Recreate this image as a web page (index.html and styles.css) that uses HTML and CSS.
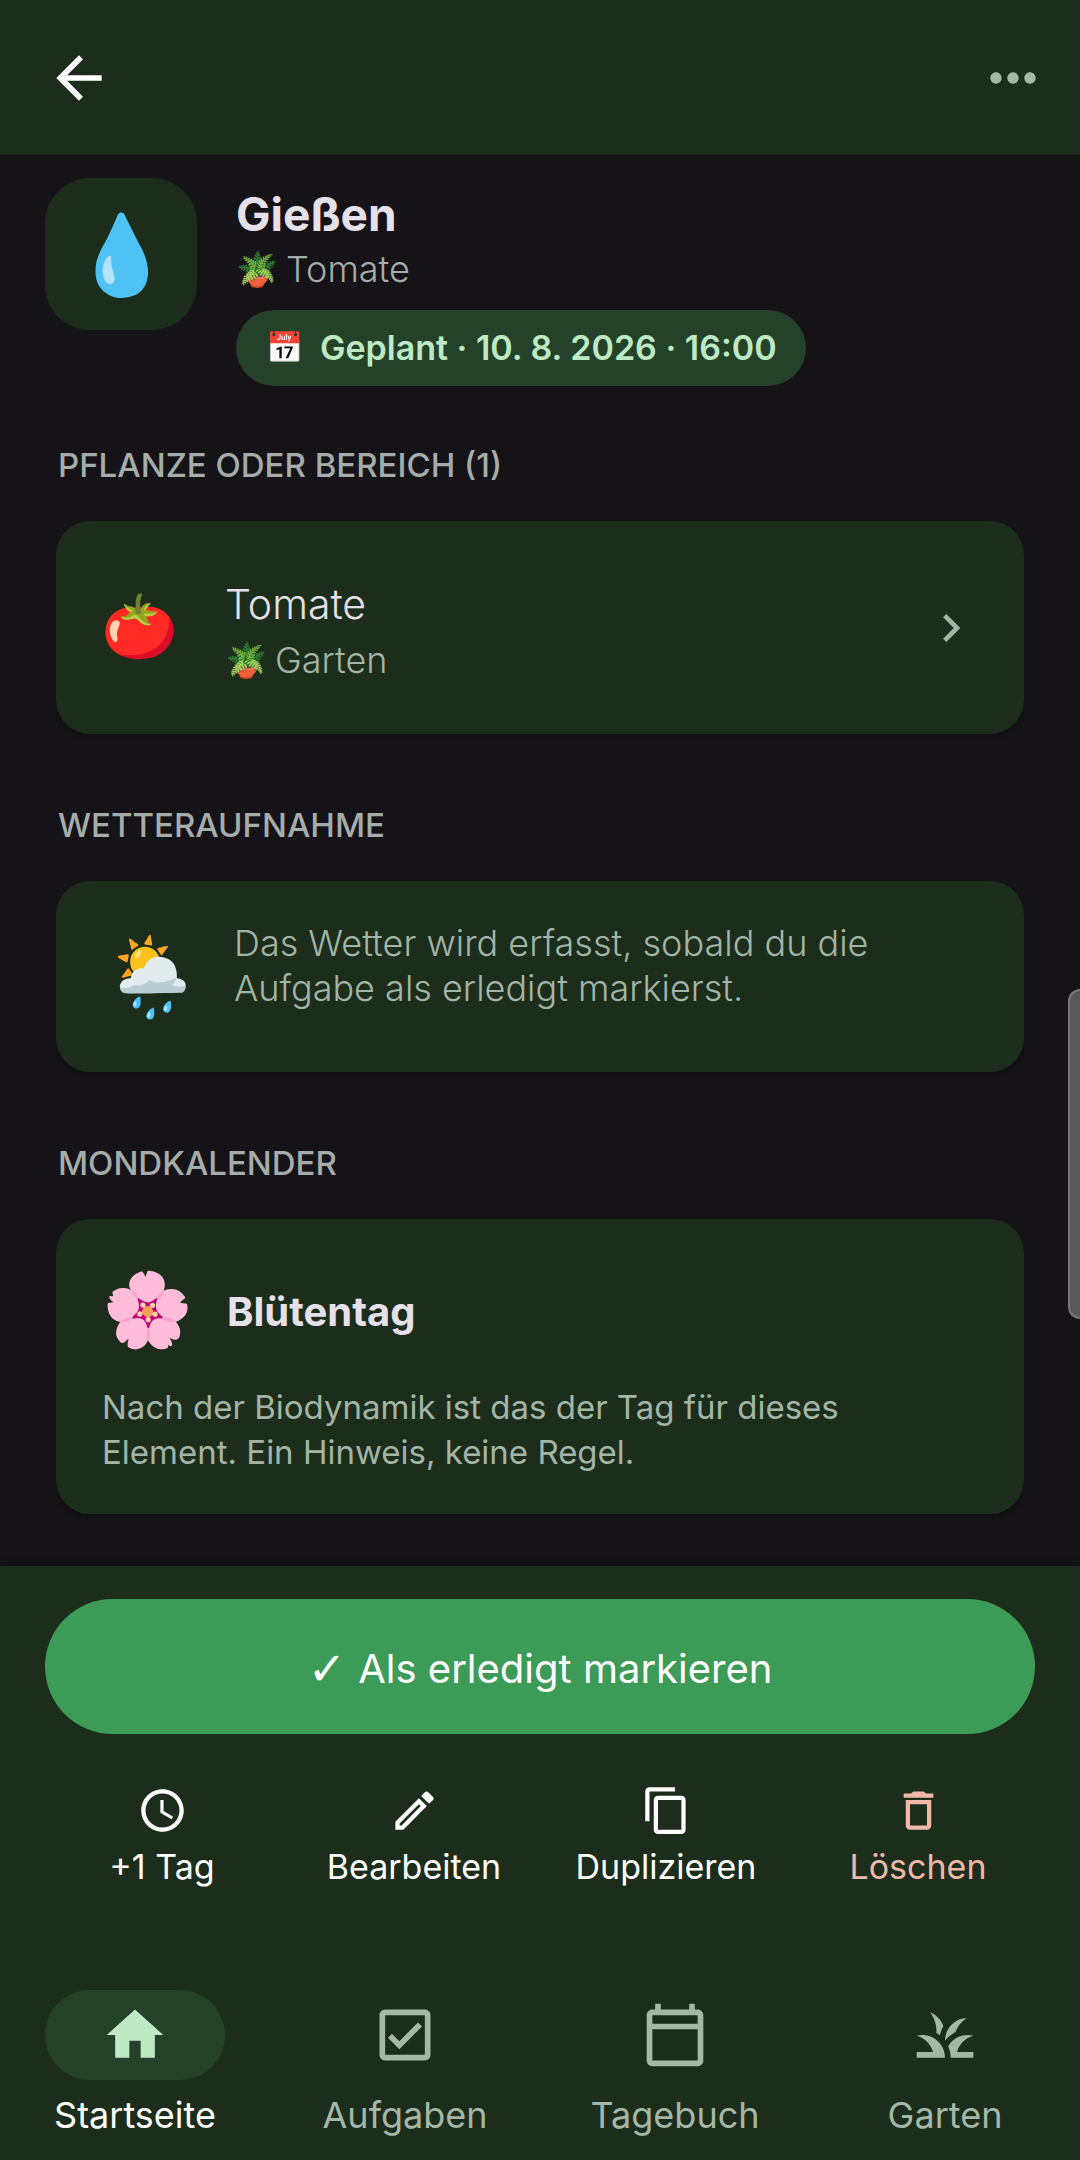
FILE: index.html
```html
<!DOCTYPE html>
<html lang="de">
<head>
  <meta charset="UTF-8" />
  <title>Gießen</title>
  <meta name="viewport" content="width=device-width, initial-scale=1.0" />
  <link rel="stylesheet" href="styles.css">
</head>
<body>
  <header class="topbar">
    <button class="icon-btn" aria-label="Zurück">
      <svg class="icon" viewBox="0 0 24 24"><path d="M20 11H7.83l5.59-5.59L12 4l-8 8 8 8 1.41-1.41L7.83 13H20v-2z"/></svg>
    </button>
    <button class="icon-btn muted" aria-label="Mehr">
      <svg class="icon" viewBox="0 0 24 24"><path d="M6 10c-1.1 0-2 .9-2 2s.9 2 2 2 2-.9 2-2-.9-2-2-2zm12 0c-1.1 0-2 .9-2 2s.9 2 2 2 2-.9 2-2-.9-2-2-2zm-6 0c-1.1 0-2 .9-2 2s.9 2 2 2 2-.9 2-2-.9-2-2-2z"/></svg>
    </button>
  </header>

  <main class="content">
    <div class="hero">
      <div class="hero-icon"><span class="emoji big">💧</span></div>
      <div class="hero-text">
        <h1>Gießen</h1>
        <p class="sub"><span class="emoji">🪴</span> Tomate</p>
        <div class="pill"><span class="emoji small">📅</span> Geplant · 10. 8. 2026 · 16:00</div>
      </div>
    </div>

    <section>
      <h2>PFLANZE ODER BEREICH (1)</h2>
      <a class="card plant" href="#">
        <span class="emoji large">🍅</span>
        <span class="plant-text">
          <span class="plant-name">Tomate</span>
          <span class="sub"><span class="emoji">🪴</span> Garten</span>
        </span>
        <svg class="chevron" viewBox="0 0 24 24"><path d="M10 6 8.59 7.41 13.17 12l-4.58 4.59L10 18l6-6z"/></svg>
      </a>
    </section>

    <section>
      <h2>WETTERAUFNAHME</h2>
      <div class="card weather">
        <span class="emoji big">🌦️</span>
        <p>Das Wetter wird erfasst, sobald du die Aufgabe als erledigt markierst.</p>
      </div>
    </section>

    <section>
      <h2>MONDKALENDER</h2>
      <div class="card moon">
        <div class="moon-head"><span class="emoji flower">🌸</span><h3>Blütentag</h3></div>
        <p>Nach der Biodynamik ist das der Tag für dieses Element. Ein Hinweis, keine Regel.</p>
      </div>
    </section>
  </main>

  <div class="scroll-handle"></div>

  <footer class="bottom">
    <button class="done-btn"><span class="check">✓</span> Als erledigt markieren</button>

    <div class="actions">
      <button>
        <svg class="icon-sm" viewBox="0 0 24 24"><path d="M11.99 2C6.47 2 2 6.48 2 12s4.47 10 9.99 10C17.52 22 22 17.52 22 12S17.52 2 11.99 2zM12 20c-4.42 0-8-3.58-8-8s3.58-8 8-8 8 3.58 8 8-3.58 8-8 8zm.5-13H11v6l5.25 3.15.75-1.23-4.5-2.67z"/></svg>
        +1 Tag
      </button>
      <button>
        <svg class="icon-sm" viewBox="0 0 24 24"><path d="M14.06 9.02l.92.92L5.92 19H5v-.92l9.06-9.06M17.66 3c-.25 0-.51.1-.7.29l-1.83 1.83 3.75 3.75 1.83-1.83c.39-.39.39-1.02 0-1.41l-2.34-2.34c-.2-.2-.45-.29-.71-.29zm-3.6 3.19L3 17.25V21h3.75L17.81 9.94l-3.75-3.75z"/></svg>
        Bearbeiten
      </button>
      <button>
        <svg class="icon-sm" viewBox="0 0 24 24"><path d="M16 1H4c-1.1 0-2 .9-2 2v14h2V3h12V1zm3 4H8c-1.1 0-2 .9-2 2v14c0 1.1.9 2 2 2h11c1.1 0 2-.9 2-2V7c0-1.1-.9-2-2-2zm0 16H8V7h11v14z"/></svg>
        Duplizieren
      </button>
      <button class="danger">
        <svg class="icon-sm" viewBox="0 0 24 24"><path d="M6 19c0 1.1.9 2 2 2h8c1.1 0 2-.9 2-2V7H6v12zM8 9h8v10H8V9zm7.5-5l-1-1h-5l-1 1H5v2h14V4z"/></svg>
        Löschen
      </button>
    </div>

    <nav class="tabs">
      <a class="tab active" href="#">
        <span class="tab-icon"><svg class="icon" viewBox="0 0 24 24"><path d="M10 20v-6h4v6h5v-8h3L12 3 2 12h3v8z"/></svg></span>
        Startseite
      </a>
      <a class="tab" href="#">
        <span class="tab-icon"><svg class="icon" viewBox="0 0 24 24"><path d="M19 3H5c-1.1 0-2 .9-2 2v14c0 1.1.9 2 2 2h14c1.1 0 2-.9 2-2V5c0-1.1-.9-2-2-2zm0 16H5V5h14v14zM17.99 9l-1.41-1.42-6.59 6.59-2.58-2.57-1.42 1.41 4 3.99z"/></svg></span>
        Aufgaben
      </a>
      <a class="tab" href="#">
        <span class="tab-icon"><svg class="icon" viewBox="0 0 24 24"><path d="M20 3h-1V1h-2v2H7V1H5v2H4c-1.1 0-2 .9-2 2v16c0 1.1.9 2 2 2h16c1.1 0 2-.9 2-2V5c0-1.1-.9-2-2-2zm0 18H4V10h16v11zm0-13H4V5h16v3z"/></svg></span>
        Tagebuch
      </a>
      <a class="tab" href="#">
        <span class="tab-icon"><svg class="icon" viewBox="0 0 24 24"><path d="M12 20H2v-2h5.75C7.02 15.19 4.81 12.99 2 12.26 2.64 12.1 3.31 12 4 12c4.42 0 8 3.58 8 8zM22 12.26c-.64-.16-1.31-.26-2-.26-2.93 0-5.48 1.58-6.88 3.93.29.66.53 1.35.67 2.07.13.65.2 1.32.2 2H22v-2h-5.75c.73-2.81 2.94-5.01 5.75-5.74zM15.64 11.02c.78-2.09 2.23-3.84 4.09-5C15.44 6.16 12 9.67 12 14v.02c.95-1.27 2.2-2.3 3.64-3zM11.42 8.85C10.58 6.66 8.88 4.89 6.7 4 8.14 5.86 9 8.18 9 10.71c0 .21-.03.41-.04.61.43.24.83.52 1.22.82.21-1.18.65-2.29 1.24-3.29z"/></svg></span>
        Garten
      </a>
    </nav>
  </footer>
</body>
</html>
```

FILE: styles.css
```css
* { box-sizing: border-box; margin: 0; padding: 0; }
body { display: flex; flex-direction: column; min-height: 100vh; background-color: #151218; color: #e6e0e9; font-family: Inter, "Open Sans", sans-serif; font-size: 36px; }
button { background: none; border: none; color: inherit; font: inherit; cursor: pointer; }
a { color: inherit; text-decoration: none; }
svg { display: block; fill: currentColor; }

.topbar { display: flex; justify-content: space-between; align-items: center; height: 155px; padding: 0 33px 0 45px; background-color: #1c2d1c; color: white; }
.icon { width: 68px; height: 68px; }
.muted { color: #a5b8a8; }

.content { flex: 1; padding: 23px 56px 51px; }
.hero { display: flex; gap: 39px; margin-left: -11px; padding-bottom: 58px; }
.hero-icon { display: flex; align-items: center; justify-content: center; width: 152px; height: 152px; border-radius: 45px; background-color: #1c2d1c; }
.hero-text { padding-top: 8px; }
h1 { font-size: 46px; line-height: 56px; font-weight: 700; }
.sub { display: flex; align-items: center; gap: 8px; line-height: 54px; font-weight: 300; color: #a5adaa; }
.pill { display: flex; align-items: center; gap: 16px; height: 76px; margin-top: 14px; padding: 0 29px 2px; border-radius: 38px; background-color: #24422a; color: #bdeac3; font-size: 34px; font-weight: 600; }

.emoji { display: flex; align-items: center; justify-content: center; width: 42px; font-size: 34px; }
.emoji.small { width: 39px; font-size: 30px; }
.emoji.large { width: 76px; padding-bottom: 4px; font-size: 62px; }
.emoji.flower { width: 90px; padding-bottom: 6px; font-size: 73px; }
.emoji.big { width: 100px; padding-bottom: 2px; font-size: 78px; }

section + section { margin-top: 70px; }
h2 { margin: 0 2px 35px; font-size: 33px; line-height: 42px; font-weight: 500; color: #a5adaa; }
.card { border-radius: 34px; background-color: #1c2d1c; color: #a3b5a6; box-shadow: 0 3px 5px rgba(0, 0, 0, 0.25); }
.plant { display: flex; align-items: center; min-height: 213px; padding: 0 45px; gap: 48px; }
.plant-text { display: flex; flex-direction: column; flex: 1; padding-top: 6px; }
.plant-name { font-size: 41px; line-height: 58px; font-weight: 300; color: #e6e0e9; }
.plant .sub { color: #a3b5a6; }
.chevron { width: 56px; height: 56px; }
.weather { display: flex; padding: 40px 45px; gap: 33px; min-height: 191px; }
.weather p { max-width: 680px; font-weight: 300; line-height: 45px; }
.moon { padding: 46px 46px 39px; }
.moon-head { display: flex; align-items: center; gap: 35px; height: 92px; }
h3 { font-size: 40px; font-weight: 700; color: #e6e0e9; }
.moon p { max-width: 780px; font-size: 33px; line-height: 45px; margin-top: 28px; }

/* fast scroll thumb at the window edge */
.scroll-handle { position: absolute; top: 989px; right: 0; width: 12px; height: 330px; border: 2px solid #77757a; border-right: none; border-radius: 12px 0 0 12px; background-color: #5a585d; }

.bottom { padding: 33px 0 23px; background-color: #1c2d1c; box-shadow: 0 -3px 8px rgba(0, 0, 0, 0.3); color: white; }
.done-btn { display: flex; align-items: center; justify-content: center; gap: 12px; width: calc(100% - 90px); height: 135px; margin: 0 45px; padding-top: 4px; border-radius: 68px; background-color: #3d9b58; font-size: 40px; }
.check { font-family: "DejaVu Sans", sans-serif; font-size: 46px; font-weight: 700; }
.actions { display: flex; padding: 51px 36px 0; }
.actions button { display: flex; flex: 1; flex-direction: column; align-items: center; gap: 11px; font-size: 34px; line-height: 40px; }
.icon-sm { width: 51px; height: 51px; }
.danger { color: #efb8a8; }

.tabs { display: flex; margin-top: 103px; }
.tab { display: flex; flex: 1; flex-direction: column; align-items: center; gap: 13px; line-height: 44px; color: #a5b8a8; }
.tab-icon { display: flex; align-items: center; justify-content: center; width: 180px; height: 90px; border-radius: 45px; }
.active { color: white; }
.active .tab-icon { background-color: #24422a; color: #bdeac3; }
```
